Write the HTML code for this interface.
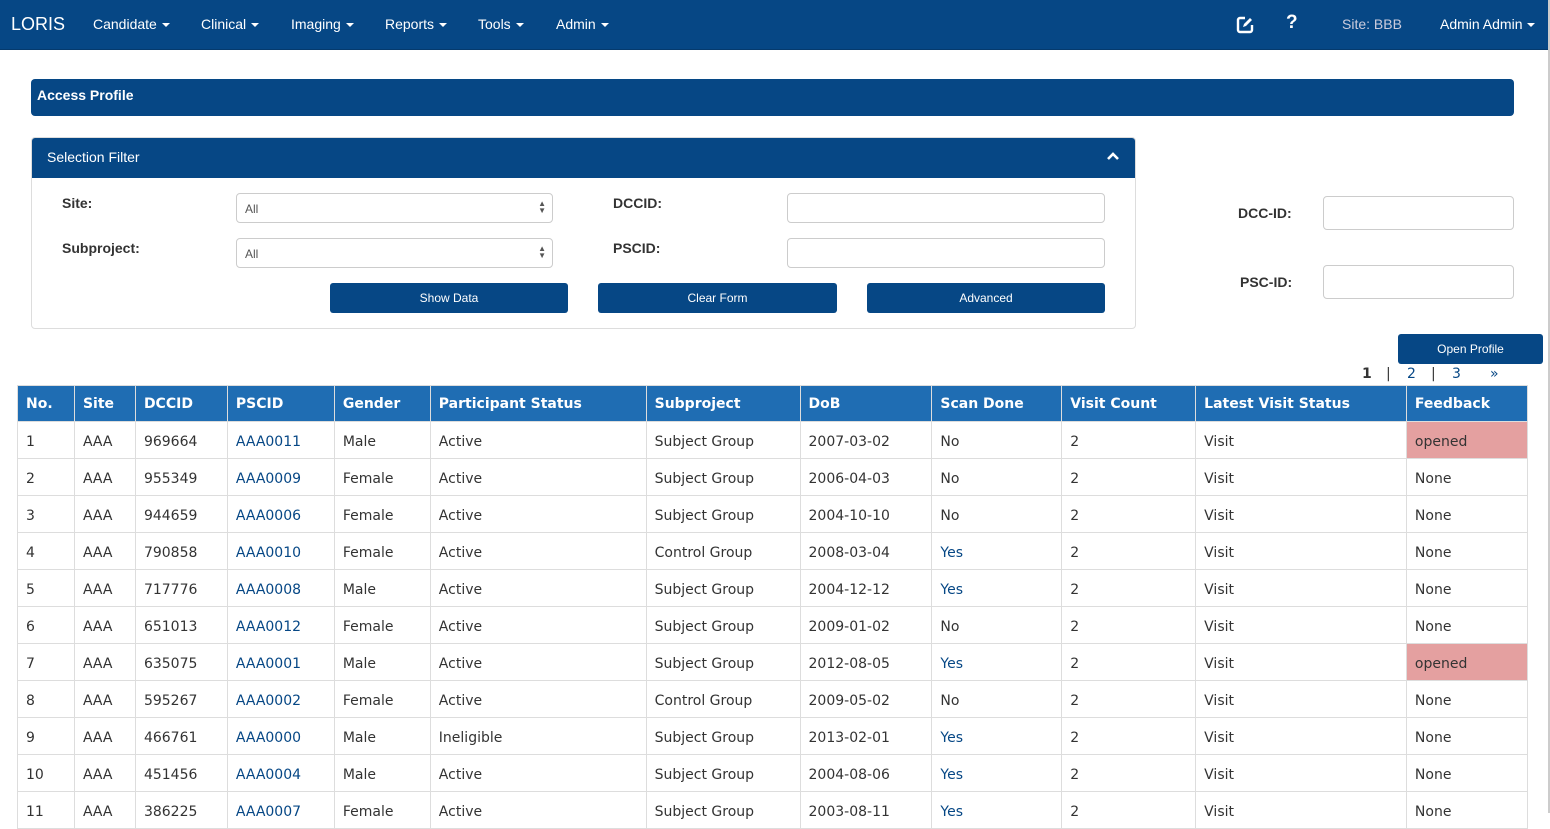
<!DOCTYPE html>
<html><head><meta charset="utf-8"><style>
*{box-sizing:border-box;margin:0;padding:0}
body{width:1550px;height:813px;overflow:hidden;background:#fff;font-family:"Liberation Sans",sans-serif;color:#333;position:relative}
.nav{position:absolute;left:0;top:0;width:1549px;height:50px;background:#064785;color:#fff;border-bottom:1px solid #053a6d}
.nav span{position:absolute;top:16px;font-size:14px}
.caret{display:inline-block;width:0;height:0;border-left:4px solid transparent;border-right:4px solid transparent;border-top:4px solid #fff;vertical-align:middle;margin-left:5px}
.vline{position:absolute;left:1548px;top:0;width:2px;height:813px;background:#ccc}
.bar{position:absolute;background:#064785;color:#fff;border-radius:4px}
.panel{position:absolute;left:31px;top:137px;width:1105px;height:192px;border:1px solid #ddd;border-radius:4px}
.ph{position:absolute;left:0;top:0;width:1103px;height:40px;background:#064785;color:#fff;font-size:14px;padding:11px 15px;border-radius:3px 3px 0 0}
.lbl{position:absolute;font-size:14px;font-weight:bold;color:#333}
.inp{position:absolute;border:1px solid #ccc;border-radius:4px;background:#fff;font-size:12px;color:#555;padding:8px}
.btn{position:absolute;background:#064785;color:#fff;font-size:12px;text-align:center;border-radius:3px;height:30px;line-height:30px}
table{position:absolute;left:17px;top:385px;border-collapse:collapse;font-family:"DejaVu Sans",sans-serif;font-size:14px;width:1511px}
th{background:#1f6db3;color:#fff;text-align:left;font-weight:bold;height:36px;padding:0 8px;border:1px solid #ddd;font-size:14px}
td{height:37px;padding:4px 8px 0;border:1px solid #ddd;color:#333}
td a{color:#064785;text-decoration:none}
.op{background:#e4a0a0}
.pg{position:absolute;top:366px;font-size:14px;font-family:"DejaVu Sans",sans-serif}
</style></head><body>
<div class="nav">
<span style="left:11px;top:14px;font-size:18px">LORIS</span>
<span style="left:93px">Candidate<i class="caret"></i></span>
<span style="left:201px">Clinical<i class="caret"></i></span>
<span style="left:291px">Imaging<i class="caret"></i></span>
<span style="left:385px">Reports<i class="caret"></i></span>
<span style="left:478px">Tools<i class="caret"></i></span>
<span style="left:556px">Admin<i class="caret"></i></span>
<svg style="position:absolute;left:1235px;top:15px" width="20" height="20" viewBox="0 0 20 20"><path d="M10 3H5a2 2 0 0 0-2 2v10a2 2 0 0 0 2 2h10a2 2 0 0 0 2-2v-5" fill="none" stroke="#fff" stroke-width="2.4"/><path d="M8 12l1-3 6-6 2 2-6 6z" fill="#fff"/></svg>
<span style="left:1286px;top:12px;font-size:19px;font-weight:bold">?</span>
<span style="left:1342px;color:#ccd">Site: BBB</span>
<span style="left:1440px">Admin Admin<i class="caret"></i></span>
</div>
<div class="vline"></div>
<div class="bar" style="left:31px;top:79px;width:1483px;height:37px;font-size:14px;font-weight:bold;padding:8px 6px">Access Profile</div>
<div class="panel">
<div class="ph">Selection Filter<svg style="position:absolute;right:16px;top:14px" width="12" height="9" viewBox="0 0 12 9"><path d="M1 7l5-5 5 5" stroke="#fff" stroke-width="2.6" fill="none"/></svg></div>
</div>
<div class="lbl" style="left:62px;top:195px">Site:</div>
<div class="lbl" style="left:62px;top:240px">Subproject:</div>
<div class="inp" style="left:236px;top:193px;width:317px;height:30px">All<span style="position:absolute;right:6px;top:6px;font-size:8px;line-height:7px">▲<br>▼</span></div>
<div class="inp" style="left:236px;top:238px;width:317px;height:30px">All<span style="position:absolute;right:6px;top:6px;font-size:8px;line-height:7px">▲<br>▼</span></div>
<div class="lbl" style="left:613px;top:195px">DCCID:</div>
<div class="lbl" style="left:613px;top:240px">PSCID:</div>
<div class="inp" style="left:787px;top:193px;width:318px;height:30px"></div>
<div class="inp" style="left:787px;top:238px;width:318px;height:30px"></div>
<div class="btn" style="left:330px;top:283px;width:238px">Show Data</div>
<div class="btn" style="left:598px;top:283px;width:239px">Clear Form</div>
<div class="btn" style="left:867px;top:283px;width:238px">Advanced</div>
<div class="lbl" style="left:1238px;top:205px">DCC-ID:</div>
<div class="lbl" style="left:1240px;top:274px">PSC-ID:</div>
<div class="inp" style="left:1323px;top:196px;width:191px;height:34px"></div>
<div class="inp" style="left:1323px;top:265px;width:191px;height:34px"></div>
<div class="btn" style="left:1398px;top:334px;width:145px;font-size:12px">Open Profile</div>
<span class="pg" style="left:1362px;font-weight:bold">1</span>
<span class="pg" style="left:1386px">|</span>
<span class="pg" style="left:1407px;color:#064785">2</span>
<span class="pg" style="left:1431px">|</span>
<span class="pg" style="left:1452px;color:#064785">3</span>
<span class="pg" style="left:1490px;color:#064785">»</span>
<table>
<colgroup><col style="width:57px"><col style="width:61px"><col style="width:92px"><col style="width:107px"><col style="width:96px"><col style="width:216px"><col style="width:154px"><col style="width:132px"><col style="width:130px"><col style="width:134px"><col style="width:211px"><col style="width:121px"></colgroup>
<tr><th>No.</th><th>Site</th><th>DCCID</th><th>PSCID</th><th>Gender</th><th>Participant Status</th><th>Subproject</th><th>DoB</th><th>Scan Done</th><th>Visit Count</th><th>Latest Visit Status</th><th>Feedback</th></tr>
<tr><td>1</td><td>AAA</td><td>969664</td><td><a>AAA0011</a></td><td>Male</td><td>Active</td><td>Subject Group</td><td>2007-03-02</td><td>No</td><td>2</td><td>Visit</td><td class="op">opened</td></tr>
<tr><td>2</td><td>AAA</td><td>955349</td><td><a>AAA0009</a></td><td>Female</td><td>Active</td><td>Subject Group</td><td>2006-04-03</td><td>No</td><td>2</td><td>Visit</td><td>None</td></tr>
<tr><td>3</td><td>AAA</td><td>944659</td><td><a>AAA0006</a></td><td>Female</td><td>Active</td><td>Subject Group</td><td>2004-10-10</td><td>No</td><td>2</td><td>Visit</td><td>None</td></tr>
<tr><td>4</td><td>AAA</td><td>790858</td><td><a>AAA0010</a></td><td>Female</td><td>Active</td><td>Control Group</td><td>2008-03-04</td><td><a>Yes</a></td><td>2</td><td>Visit</td><td>None</td></tr>
<tr><td>5</td><td>AAA</td><td>717776</td><td><a>AAA0008</a></td><td>Male</td><td>Active</td><td>Subject Group</td><td>2004-12-12</td><td><a>Yes</a></td><td>2</td><td>Visit</td><td>None</td></tr>
<tr><td>6</td><td>AAA</td><td>651013</td><td><a>AAA0012</a></td><td>Female</td><td>Active</td><td>Subject Group</td><td>2009-01-02</td><td>No</td><td>2</td><td>Visit</td><td>None</td></tr>
<tr><td>7</td><td>AAA</td><td>635075</td><td><a>AAA0001</a></td><td>Male</td><td>Active</td><td>Subject Group</td><td>2012-08-05</td><td><a>Yes</a></td><td>2</td><td>Visit</td><td class="op">opened</td></tr>
<tr><td>8</td><td>AAA</td><td>595267</td><td><a>AAA0002</a></td><td>Female</td><td>Active</td><td>Control Group</td><td>2009-05-02</td><td>No</td><td>2</td><td>Visit</td><td>None</td></tr>
<tr><td>9</td><td>AAA</td><td>466761</td><td><a>AAA0000</a></td><td>Male</td><td>Ineligible</td><td>Subject Group</td><td>2013-02-01</td><td><a>Yes</a></td><td>2</td><td>Visit</td><td>None</td></tr>
<tr><td>10</td><td>AAA</td><td>451456</td><td><a>AAA0004</a></td><td>Male</td><td>Active</td><td>Subject Group</td><td>2004-08-06</td><td><a>Yes</a></td><td>2</td><td>Visit</td><td>None</td></tr>
<tr><td>11</td><td>AAA</td><td>386225</td><td><a>AAA0007</a></td><td>Female</td><td>Active</td><td>Subject Group</td><td>2003-08-11</td><td><a>Yes</a></td><td>2</td><td>Visit</td><td>None</td></tr>
</table>
</body></html>
